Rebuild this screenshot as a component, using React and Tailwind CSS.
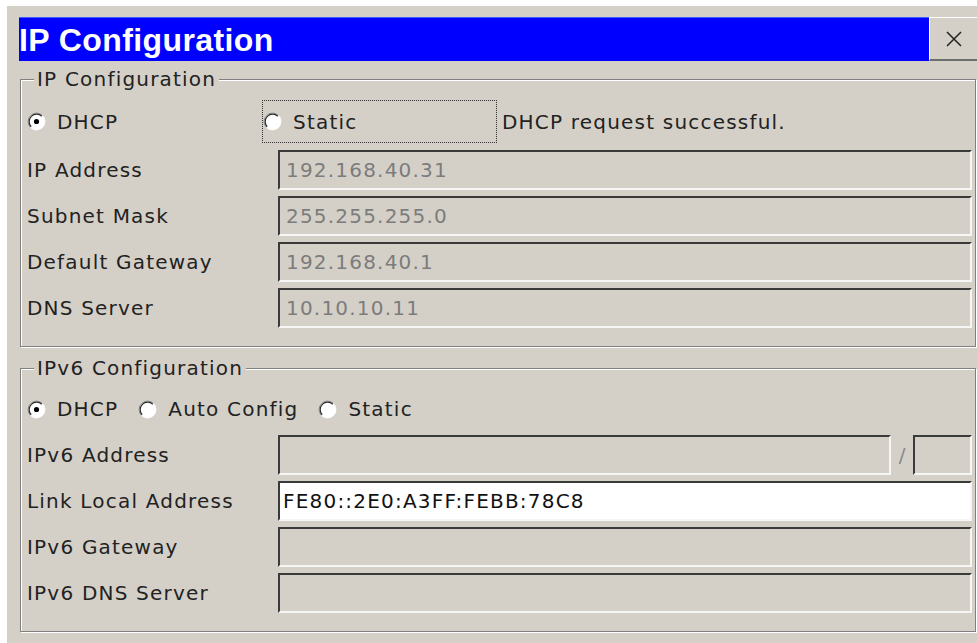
import React from "react";

const FONT = { fontFamily: '"DejaVu Sans", "Liberation Sans", sans-serif' };

function Radio({ checked }) {
  return (
    <svg width="19" height="19" viewBox="0 0 19 19" className="shrink-0">
      <circle cx="9.5" cy="9.5" r="8.5" fill="#ffffff" />
      <path d="M3.49 15.51 A8.5 8.5 0 0 1 15.51 3.49" fill="none" stroke="#8a8a8a" strokeWidth="1" />
      <path d="M4.2 14.8 A7.5 7.5 0 0 1 14.8 4.2" fill="none" stroke="#2e2e2e" strokeWidth="1.2" />
      <path d="M15.51 3.49 A8.5 8.5 0 0 1 3.49 15.51" fill="none" stroke="#ffffff" strokeWidth="1" />
      {checked && <circle cx="9.5" cy="9.5" r="2.6" fill="#000000" />}
    </svg>
  );
}

function RadioItem({ checked, label }) {
  return (
    <div className="flex items-center gap-[11px]">
      <Radio checked={checked} />
      <span>{label}</span>
    </div>
  );
}

function Field({ value, white, className = "" }) {
  return (
    <div
      className={`h-[40px] flex items-center border-2 border-t-[#3a3a3a] border-l-[#3a3a3a] border-b-[#f6f6f6] border-r-[#f6f6f6] ${
        white ? "bg-white text-[#111] pl-[3px]" : "bg-[#d4d0c8] text-[#7c7c7c] pl-[6px]"
      } ${className}`}
    >
      {value}
    </div>
  );
}

function Row({ label, children }) {
  return (
    <div className="flex items-center h-[40px]">
      <div className="w-[251px] shrink-0">{label}</div>
      <div className="flex-1 flex items-center">{children}</div>
    </div>
  );
}

function GroupBox({ title, children }) {
  return (
    <div className="relative ml-px w-[956px] border border-[#808080] shadow-[inset_1px_1px_0_#ffffff,1px_1px_0_#ffffff] pl-[6px] pr-[3px] pt-[20px] pb-[18px]">
      <div className="absolute left-[13px] top-[-13px] px-[3px] bg-[#d4d0c8] leading-[24px]">
        {title}
      </div>
      {children}
    </div>
  );
}

export default function App() {
  return (
    <div
      className="w-[977px] h-[643px] bg-white pl-[7px] pt-[6px] overflow-hidden text-[20px] tracking-[1.2px] text-[#222]"
      style={FONT}
    >
      <div className="h-full bg-[#d4d0c8] pl-[12px] pt-[11px] flex flex-col">
        {/* title bar */}
        <div className="flex h-[44px] shrink-0">
          <div
            className="flex-1 bg-[#0000ff] border-t border-[#3d5cff] flex items-center text-white font-bold text-[32px] tracking-[0.4px] leading-none"
            style={{ fontFamily: '"Liberation Sans", Arial, sans-serif' }}
          >
            IP Configuration
          </div>
          <div className="w-[48px] bg-[#d4d0c8] border-t border-l border-white border-b-2 border-b-[#6e6e6e] flex items-center justify-center">
            <svg width="18" height="18" viewBox="0 0 18 18">
              <path d="M2 2 L16 16 M16 2 L2 16" stroke="#222" strokeWidth="1.5" />
            </svg>
          </div>
        </div>

        {/* IPv4 group */}
        <div className="mt-[18px]">
          <GroupBox title="IP Configuration">
            <div className="flex items-center h-[43px]">
              <div className="w-[235px]">
                <RadioItem checked label="DHCP" />
              </div>
              <div className="w-[235px] h-[43px] border border-dotted border-[#333] flex items-center">
                <RadioItem label="Static" />
              </div>
              <span className="ml-[5px]">DHCP request successful.</span>
            </div>
            <div className="mt-[7px] flex flex-col gap-[6px]">
              <Row label="IP Address">
                <Field className="flex-1" value="192.168.40.31" />
              </Row>
              <Row label="Subnet Mask">
                <Field className="flex-1" value="255.255.255.0" />
              </Row>
              <Row label="Default Gateway">
                <Field className="flex-1" value="192.168.40.1" />
              </Row>
              <Row label="DNS Server">
                <Field className="flex-1" value="10.10.10.11" />
              </Row>
            </div>
          </GroupBox>
        </div>

        {/* IPv6 group */}
        <div className="mt-[21px]">
          <GroupBox title="IPv6 Configuration">
            <div className="flex items-center h-[40px] gap-[20px]">
              <RadioItem checked label="DHCP" />
              <RadioItem label="Auto Config" />
              <RadioItem label="Static" />
            </div>
            <div className="mt-[6px] flex flex-col gap-[6px]">
              <Row label="IPv6 Address">
                <Field className="flex-1" value="" />
                <span className="w-[22px] text-center text-[#8a8a8a] tracking-normal">/</span>
                <Field className="w-[59px]" value="" />
              </Row>
              <Row label="Link Local Address">
                <Field className="flex-1" white value="FE80::2E0:A3FF:FEBB:78C8" />
              </Row>
              <Row label="IPv6 Gateway">
                <Field className="flex-1" value="" />
              </Row>
              <Row label="IPv6 DNS Server">
                <Field className="flex-1" value="" />
              </Row>
            </div>
          </GroupBox>
        </div>
      </div>
    </div>
  );
}
